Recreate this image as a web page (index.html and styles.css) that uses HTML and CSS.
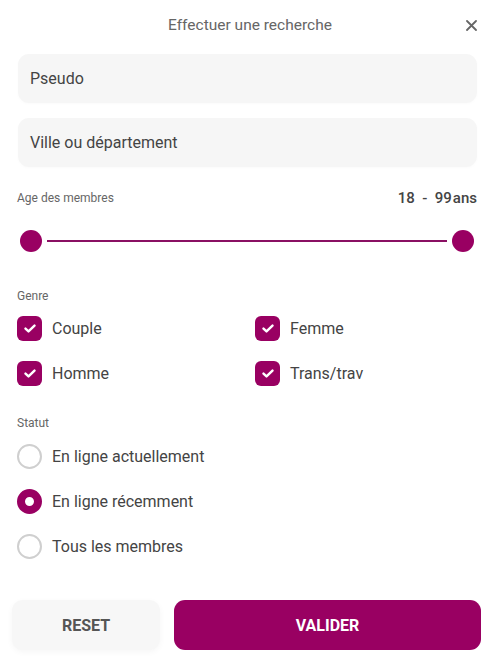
FILE: index.html
```html
<!DOCTYPE html>
<html lang="fr">
<head>
<meta charset="utf-8">
<link rel="stylesheet" href="styles.css">
</head>
<body>
<div class="modal">
  <header class="head">
    <span></span>
    <h1 class="title">Effectuer une recherche</h1>
    <button class="close" aria-label="Fermer">
      <svg width="11" height="11" viewBox="0 0 11 11"><path d="M1 1L10 10M10 1L1 10" stroke="#666" stroke-width="1.8" stroke-linecap="round"/></svg>
    </button>
  </header>

  <div class="field">Pseudo</div>
  <div class="field field2">Ville ou département</div>

  <div class="age-row">
    <span class="label">Age des membres</span>
    <span class="age-val">18&nbsp; - &nbsp;99<span class="ans">ans</span></span>
  </div>
  <div class="slider">
    <span class="thumb"></span>
    <span class="track"></span>
    <span class="thumb"></span>
  </div>

  <div class="label sec-genre">Genre</div>
  <div class="checks">
    <label class="opt"><span class="box"><svg width="12" height="9" viewBox="0 0 12 9"><path d="M1.5 4.6L4.5 7.4L10.5 1.6" fill="none" stroke="#fff" stroke-width="2.4" stroke-linecap="round" stroke-linejoin="round"/></svg></span>Couple</label>
    <label class="opt"><span class="box"><svg width="12" height="9" viewBox="0 0 12 9"><path d="M1.5 4.6L4.5 7.4L10.5 1.6" fill="none" stroke="#fff" stroke-width="2.4" stroke-linecap="round" stroke-linejoin="round"/></svg></span>Femme</label>
    <label class="opt"><span class="box"><svg width="12" height="9" viewBox="0 0 12 9"><path d="M1.5 4.6L4.5 7.4L10.5 1.6" fill="none" stroke="#fff" stroke-width="2.4" stroke-linecap="round" stroke-linejoin="round"/></svg></span>Homme</label>
    <label class="opt"><span class="box"><svg width="12" height="9" viewBox="0 0 12 9"><path d="M1.5 4.6L4.5 7.4L10.5 1.6" fill="none" stroke="#fff" stroke-width="2.4" stroke-linecap="round" stroke-linejoin="round"/></svg></span>Trans/trav</label>
  </div>

  <div class="label sec-statut">Statut</div>
  <div class="radios">
    <label class="opt"><span class="radio"></span>En ligne actuellement</label>
    <label class="opt"><span class="radio on"></span>En ligne récemment</label>
    <label class="opt"><span class="radio"></span>Tous les membres</label>
  </div>

  <div class="actions">
    <button class="btn reset">RESET</button>
    <button class="btn valider">VALIDER</button>
  </div>
</div>
</body>
</html>
```

FILE: styles.css
```css
* { box-sizing: border-box; }
html, body {
  margin: 0;
  padding: 0;
  background: #fff;
}
body {
  font-family: Roboto, "Liberation Sans", sans-serif;
  color: #444;
}
.modal {
  width: 493px;
  height: 664px;
  padding: 0 16px 0 17px;
  display: flex;
  flex-direction: column;
}
.head {
  height: 48px;
  display: grid;
  grid-template-columns: 1fr auto 1fr;
  align-items: center;
  padding-top: 1px;
}
.title {
  margin: 0;
  font-size: 15.5px;
  font-weight: 400;
  color: #666;
  padding-left: 6px;
}
.close {
  justify-self: end;
  border: 0;
  background: none;
  padding: 0;
  width: 11px;
  height: 11px;
  display: flex;
  margin-top: 1px;
}
.field {
  margin-top: 6px;
  margin-left: 1px;
  height: 49px;
  border-radius: 11px;
  background: #f6f6f6;
  box-shadow: 0 1px 3px rgba(0,0,0,0.02);
  display: flex;
  align-items: center;
  padding-left: 12px;
  font-size: 16px;
  color: #444;
}
.field2 { margin-top: 15px; }
.label {
  font-size: 12px;
  color: #666;
  line-height: 14px;
}
.age-row {
  margin-top: 21px;
  height: 20px;
  display: flex;
  justify-content: space-between;
  align-items: center;
}
.age-val {
  font-size: 15px;
  font-weight: 500;
  color: #444;
}
.ans { margin-left: 1px; }
.slider {
  margin-top: 22px;
  height: 22px;
  display: flex;
  align-items: center;
  gap: 2px;
  padding-left: 3px;
  padding-right: 3px;
}
.thumb {
  width: 22px;
  height: 22px;
  border-radius: 50%;
  background: #990062;
  flex: none;
}
.track {
  flex: 1;
  height: 2px;
  background: #8a1063;
  margin: 0 3px;
}
.sec-genre { margin-top: 37px; }
.checks {
  margin-top: 13px;
  display: grid;
  grid-template-columns: 238px 1fr;
  row-gap: 20px;
}
.opt {
  display: flex;
  align-items: center;
  height: 25px;
  font-size: 16px;
  color: #444;
  gap: 10px;
}
.box {
  width: 25px;
  height: 25px;
  border-radius: 6px;
  background: #990062;
  display: flex;
  align-items: center;
  justify-content: center;
  flex: none;
}
.sec-statut { margin-top: 30px; }
.radios {
  margin-top: 14px;
  display: flex;
  flex-direction: column;
  gap: 20px;
}
.radio {
  width: 25px;
  height: 25px;
  border-radius: 50%;
  border: 2px solid #cfcfcf;
  flex: none;
}
.radio.on {
  border: 8px solid #990062;
  background: #fff;
}
.actions {
  margin-top: 41px;
  display: flex;
  gap: 14px;
  margin-left: -5px;
  margin-right: -4px;
}
.btn {
  height: 50px;
  border: 0;
  border-radius: 11px;
  font-family: Roboto, "Liberation Sans", sans-serif;
  font-size: 16px;
  font-weight: 700;
}
.reset {
  width: 148px;
  background: #f7f7f7;
  color: #555;
  box-shadow: 0 2px 6px rgba(0,0,0,0.04);
}
.valider {
  flex: 1;
  background: #990062;
  color: #fff;
}
```
